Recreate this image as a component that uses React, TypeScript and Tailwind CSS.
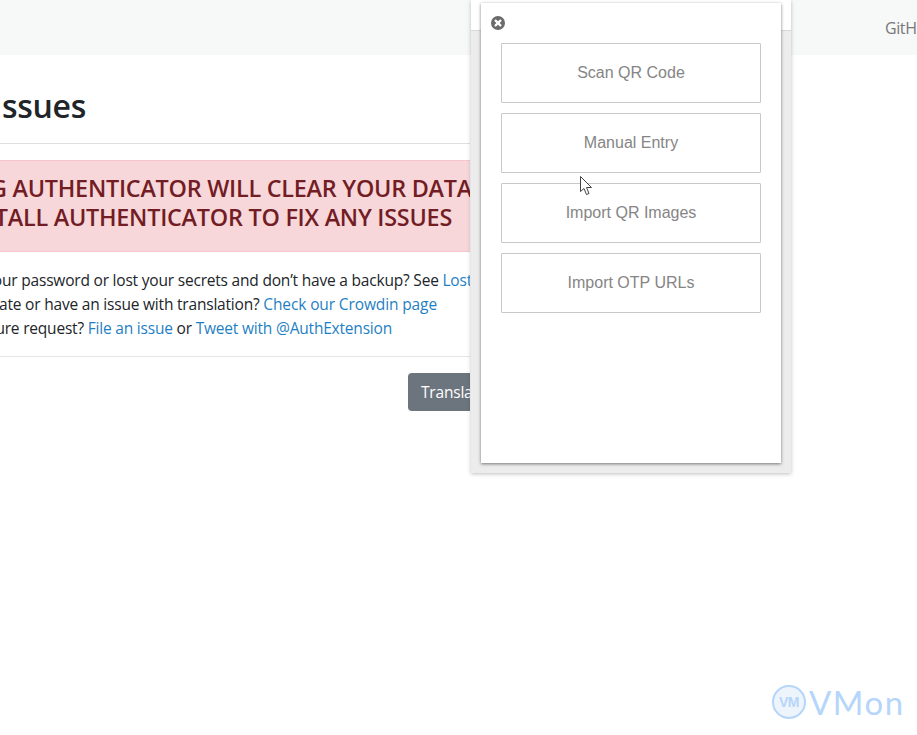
export default function App() {
  const buttons = ["Scan QR Code", "Manual Entry", "Import QR Images", "Import OTP URLs"];
  return (
    <div className="relative w-[917px] h-[735px] overflow-hidden bg-white font-['Open_Sans',sans-serif]">
      <nav className="h-[55px] bg-[#f7f8f8] flex items-center justify-start overflow-hidden">
        <span className="ml-[885px] text-[16px] tracking-[-0.4px] text-[#777] whitespace-nowrap">GitHub</span>
      </nav>
      <main className="w-[470px] overflow-hidden">
        <div className="h-[89px] border-b border-[#dfdfdf] flex justify-end pr-[384px] pt-[29px]">
          <h1 className="text-[32px] leading-[44px] font-semibold text-[#212529] whitespace-nowrap tracking-[-0.3px]">Known Issues</h1>
        </div>
        <div className="mt-[16px] h-[92px] bg-[#f8d7da] border-y border-[#f5c6cb] text-[#721c24] text-[23.4px] leading-[29px] font-semibold pt-[13px] tracking-[-0.25px] whitespace-nowrap">
          <div className="flex justify-end"><span className="shrink-0 -mr-[2px]">UNINSTALLING AUTHENTICATOR WILL CLEAR YOUR DATA</span></div>
          <div className="flex justify-end pr-[18px]"><span className="shrink-0">REINSTALL AUTHENTICATOR TO FIX ANY ISSUES</span></div>
        </div>
        <div className="mt-[16px] text-[15.5px] leading-[24px] text-[#212529] whitespace-nowrap tracking-[-0.2px]">
          <div className="flex justify-end"><span className="shrink-0 -mr-[2px]">Forgot your password or lost your secrets and don’t have a backup? See <a className="text-[#1f7fc4]">Lost</a></span></div>
          <div className="flex justify-end pr-[33px]"><span className="shrink-0">Want to translate or have an issue with translation? <a className="text-[#1f7fc4] tracking-[-0.12px]">Check our Crowdin page</a></span></div>
          <div className="flex justify-end pr-[78px]"><span className="shrink-0">Have a feature request? <a className="text-[#1f7fc4]">File an issue</a> or <a className="text-[#1f7fc4]">Tweet with @AuthExtension</a></span></div>
        </div>
        <div className="mt-[16px] border-t border-[#e5e5e5] pt-[16px] pl-[408px]">
          <div className="w-[90px] h-[38px] rounded-[4px] bg-[#6c757d] text-white text-[15.5px] leading-[38px] pl-[13px] whitespace-nowrap tracking-[-0.2px]">Translate</div>
        </div>
      </main>

      <div className="absolute left-[471px] top-0 w-[320px] h-[473px] shadow-[0_1px_4px_rgba(0,0,0,0.25)] flex flex-col">
        <div className="h-[31px] bg-white border-b border-[#d8d8d8]" />
        <div className="flex-1 bg-[#ececec]" />
        <div className="absolute left-[10px] top-[3px] w-[300px] h-[460px] bg-white shadow-[0_1px_3px_rgba(0,0,0,0.5)] px-[20px] pt-[40px] flex flex-col gap-[10px] font-['Liberation_Sans',sans-serif]">
          <svg className="absolute left-[10px] top-[13px]" width="14" height="14" viewBox="0 0 14 14">
            <circle cx="7" cy="7" r="7" fill="#6b6b6b" />
            <path d="M4.6 4.6 L9.4 9.4 M9.4 4.6 L4.6 9.4" stroke="#fff" strokeWidth="2.2" strokeLinecap="round" />
          </svg>
          {buttons.map((b) => (
            <div key={b} className="h-[60px] border border-[#c8c8c8] rounded-[1px] flex items-center justify-center text-[16px] text-[#858585]">{b}</div>
          ))}
        </div>
      </div>

      <svg className="absolute left-[580px] top-[176px]" width="13" height="20" viewBox="0 0 13 20">
        <path d="M0.5 0.5 V15.5 L4 12.5 L6.5 18.5 L9 17.5 L6.5 11.5 L11.5 11.5 Z" fill="#fff" stroke="#444" strokeWidth="1" />
      </svg>

      <div className="absolute left-[772px] top-[685px] flex items-center gap-[3px]">
        <div className="w-[34px] h-[34px] rounded-full border-[2px] border-[#b5d6fa] bg-[#eef4fb] flex items-center justify-center text-[14px] font-bold tracking-[-0.5px] text-[#b5d6fa] font-['Liberation_Sans',sans-serif]">VM</div>
        <span className="text-[33px] leading-[34px] text-[#b5d6fa] font-['Lato',sans-serif] tracking-[1.5px]">VMon</span>
      </div>
    </div>
  );
}
